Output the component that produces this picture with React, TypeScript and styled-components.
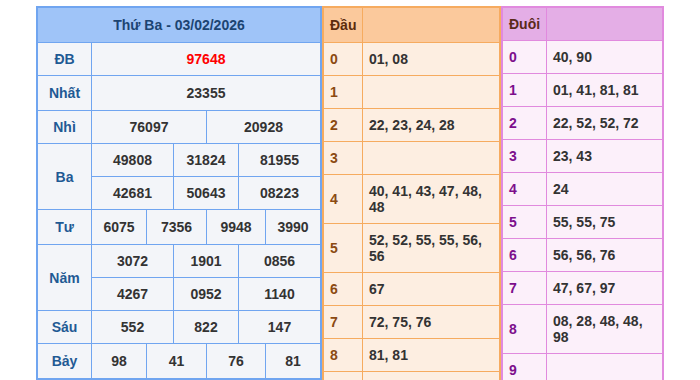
import React from "react";
import styled, { createGlobalStyle } from "styled-components";

const Global = createGlobalStyle`
  html, body { margin: 0; padding: 0; background: #ffffff; }
  body { font-family: "Liberation Sans", Arial, sans-serif; }
`;

const Page = styled.div`
  display: flex;
  justify-content: center;
  align-items: flex-start;
  padding-top: 6px;
`;

const MainGrid = styled.div`
  display: grid;
  grid-template-columns: 53px 54px 26px 32px 31px 26px 54px;
  grid-template-rows: 34px 32px 34px 32px 32px 32px 34px 32px 32px 32px 34px;
  gap: 1px;
  background: #70a5f0;
  border: 2px solid #70a5f0;
`;

const MainCell = styled.div<{ $span?: number; $rows?: number; $kind?: "head" | "label" | "num" | "special" }>`
  grid-column: span ${(p) => p.$span ?? 1};
  grid-row: span ${(p) => p.$rows ?? 1};
  display: flex;
  align-items: center;
  justify-content: center;
  font-size: 14px;
  font-weight: 700;
  line-height: 16px;
  background: ${(p) => (p.$kind === "head" ? "#9fc4f8" : "#f3f5f9")};
  color: ${(p) =>
    p.$kind === "head"
      ? "#1c4472"
      : p.$kind === "label"
      ? "#1f5a94"
      : p.$kind === "special"
      ? "#ff0000"
      : "#333333"};
`;

const SideGrid = styled.div<{ $line: string; $cols: string }>`
  display: grid;
  grid-template-columns: ${(p) => p.$cols};
  grid-auto-rows: minmax(32px, auto);
  gap: 1px;
  background: ${(p) => p.$line};
  border: 2px solid ${(p) => p.$line};
`;

const SideCell = styled.div<{ $bg: string; $color: string; $tall?: boolean }>`
  display: flex;
  align-items: center;
  padding: 8px 6px;
  box-sizing: border-box;
  min-height: ${(p) => (p.$tall ? "34px" : "32px")};
  font-size: 14px;
  font-weight: 700;
  line-height: 16px;
  background: ${(p) => p.$bg};
  color: ${(p) => p.$color};
`;

type Row = { label: string; cells: { v: string; span: number }[][]; special?: boolean };

const rows: Row[] = [
  { label: "ĐB", cells: [[{ v: "97648", span: 6 }]], special: true },
  { label: "Nhất", cells: [[{ v: "23355", span: 6 }]] },
  { label: "Nhì", cells: [[{ v: "76097", span: 3 }, { v: "20928", span: 3 }]] },
  {
    label: "Ba",
    cells: [
      [{ v: "49808", span: 2 }, { v: "31824", span: 2 }, { v: "81955", span: 2 }],
      [{ v: "42681", span: 2 }, { v: "50643", span: 2 }, { v: "08223", span: 2 }],
    ],
  },
  { label: "Tư", cells: [[{ v: "6075", span: 1 }, { v: "7356", span: 2 }, { v: "9948", span: 2 }, { v: "3990", span: 1 }]] },
  {
    label: "Năm",
    cells: [
      [{ v: "3072", span: 2 }, { v: "1901", span: 2 }, { v: "0856", span: 2 }],
      [{ v: "4267", span: 2 }, { v: "0952", span: 2 }, { v: "1140", span: 2 }],
    ],
  },
  { label: "Sáu", cells: [[{ v: "552", span: 2 }, { v: "822", span: 2 }, { v: "147", span: 2 }]] },
  { label: "Bảy", cells: [[{ v: "98", span: 1 }, { v: "41", span: 2 }, { v: "76", span: 2 }, { v: "81", span: 1 }]] },
];

const dau = ["01, 08", "", "22, 23, 24, 28", "", "40, 41, 43, 47, 48, 48", "52, 52, 55, 55, 56, 56", "67", "72, 75, 76", "81, 81", ""];
const duoi = ["40, 90", "01, 41, 81, 81", "22, 52, 52, 72", "23, 43", "24", "55, 55, 75", "56, 56, 76", "47, 67, 97", "08, 28, 48, 48, 98", ""];

type Theme = { line: string; head: string; body: string; headText: string; keyText: string; cols: string };

const orange: Theme = { line: "#f6ab5f", head: "#fbc99c", body: "#fdeee1", headText: "#5c2c0c", keyText: "#8b4a12", cols: "38px 136px" };
const pink: Theme = { line: "#e18ade", head: "#e4aee6", body: "#fcf0fa", headText: "#5a2a1a", keyText: "#7d0f8c", cols: "43px 115px" };

function SideTable({ title, data, theme, tallHead }: { title: string; data: string[]; theme: Theme; tallHead?: boolean }) {
  return (
    <SideGrid $line={theme.line} $cols={theme.cols}>
      <SideCell $bg={theme.head} $color={theme.headText} $tall={tallHead}>{title}</SideCell>
      <SideCell $bg={theme.head} $color={theme.headText} $tall={tallHead} />
      {data.map((v, i) => (
        <React.Fragment key={i}>
          <SideCell $bg={theme.body} $color={theme.keyText}>{i}</SideCell>
          <SideCell $bg={theme.body} $color="#333333">{v}</SideCell>
        </React.Fragment>
      ))}
    </SideGrid>
  );
}

export default function App() {
  return (
    <>
      <Global />
      <Page>
        <MainGrid>
          <MainCell $span={7} $kind="head">Thứ Ba - 03/02/2026</MainCell>
          {rows.map((r) => (
            <React.Fragment key={r.label}>
              <MainCell $kind="label" $rows={r.cells.length}>{r.label}</MainCell>
              {r.cells.flat().map((c, j) => (
                <MainCell key={j} $span={c.span} $kind={r.special ? "special" : "num"}>
                  {c.v}
                </MainCell>
              ))}
            </React.Fragment>
          ))}
        </MainGrid>
        <SideTable title="Đầu" data={dau} theme={orange} tallHead />
        <SideTable title="Đuôi" data={duoi} theme={pink} />
      </Page>
    </>
  );
}
